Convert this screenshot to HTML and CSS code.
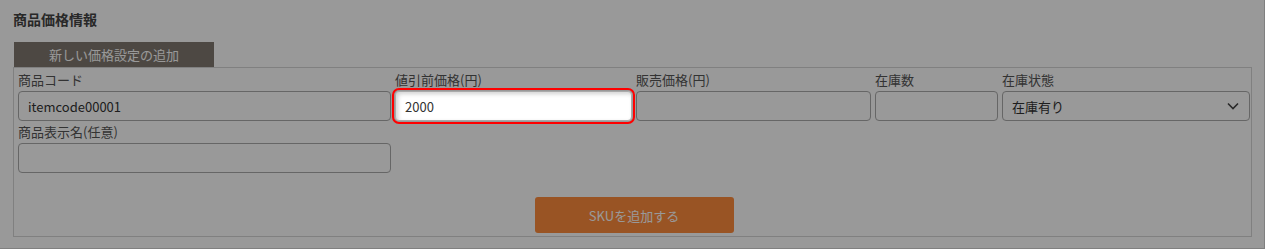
FILE: index.html
```html
<!DOCTYPE html>
<html lang="ja">
<head>
    <link rel="stylesheet" href="styles.css">
    <meta charset="UTF-8">
    <meta name="viewport" content="width=device-width, initial-scale=1.0">
    <title>商品価格情報</title>
</head>
<body>
    <section class="panel">
        <h2 class="panel_title">商品価格情報</h2>
        <div class="tab">新しい価格設定の追加</div>
        <div class="price_box">
            <div class="fields">
                <div class="field">
                    <label>商品コード</label>
                    <input type="text" value="itemcode00001">
                </div>
                <div class="field">
                    <label>値引前価格(円)</label>
                    <input type="text" value="2000" class="spotlight">
                </div>
                <div class="field">
                    <label>販売価格(円)</label>
                    <input type="text">
                </div>
                <div class="field">
                    <label>在庫数</label>
                    <input type="text">
                </div>
                <div class="field">
                    <label>在庫状態</label>
                    <div class="select">
                        <span>在庫有り</span>
                        <svg width="12" height="8" viewBox="0 0 12 8"><path d="M1 1.5l5 5 5-5" fill="none" stroke="#444" stroke-width="1.6"/></svg>
                    </div>
                </div>
                <div class="field field_first">
                    <label>商品表示名(任意)</label>
                    <input type="text">
                </div>
            </div>
            <div class="actions">
                <button class="add_sku">SKUを追加する</button>
            </div>
        </div>
    </section>
</body>
</html>
```

FILE: styles.css
```css
body {
    margin: 0;
    padding: 0;
    font-family: "Noto Sans CJK JP", "Noto Sans", sans-serif;
    background-color: #fff;
}
.panel {
    height: 240px;
    padding: 8px 12px 0 13px;
    border-right: 1px solid #d5d5d5;
    border-bottom: 1px solid #d5d5d5;
}
.panel_title {
    margin: 0;
    font-size: 14px;
    line-height: 22px;
    font-weight: bold;
    color: #444;
}
.tab {
    margin: 12px 0 0 1px;
    width: 200px;
    height: 25px;
    line-height: 25px;
    text-align: center;
    font-size: 13px;
    color: #fff;
    background-color: #807870;
}
.price_box {
    border: 1px solid #d5d5d5;
    padding: 1px 1px 3px 4px;
}
.fields {
    display: grid;
    grid-template-columns: 373px 237px 235px 123px 1fr;
    column-gap: 4px;
}
.field label {
    display: block;
    font-size: 13px;
    line-height: 22px;
    color: #555;
    white-space: nowrap;
}
.field_first {
    grid-column: 1;
}
.field input,
.select {
    box-sizing: border-box;
    width: 100%;
    height: 30px;
    margin: 0;
    padding: 0 9px;
    border: 1px solid #aaa;
    border-radius: 4px;
    background-color: #fff;
    font-family: inherit;
    font-size: 13px;
    color: #333;
}
.select {
    display: flex;
    align-items: center;
    justify-content: space-between;
}
.select svg {
    margin-right: 1px;
}
.field input.spotlight {
    position: relative;
    z-index: 10;
    outline: 2px solid #ff0000;
    outline-offset: 1px;
    box-shadow: inset 2px 2px 4px rgba(0, 0, 0, 0.18), 0 0 0 3000px rgba(0, 0, 0, 0.4);
}
.actions {
    display: flex;
    justify-content: center;
    margin-top: 24px;
}
.add_sku {
    width: 199px;
    height: 36px;
    border: none;
    border-radius: 3px;
    background-color: #ff8c3c;
    color: #fff;
    font-family: inherit;
    font-size: 13px;
}
```
